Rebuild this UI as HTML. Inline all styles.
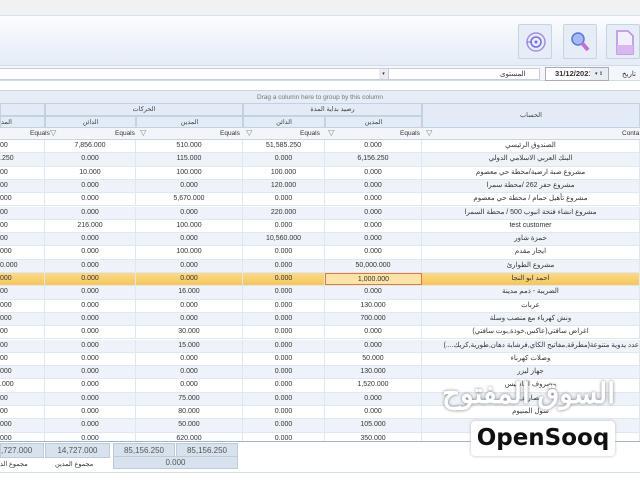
<!DOCTYPE html><html><head><meta charset="utf-8"><style>
*{margin:0;padding:0;box-sizing:border-box}
body{width:640px;height:480px;overflow:hidden;background:#fff;font-family:"Liberation Sans","Noto Sans CJK SC",sans-serif;font-size:7px;color:#333;position:relative}
.a{position:absolute}
.btn{position:absolute;top:24px;width:34px;height:35px;border:1px solid #c9d3e0;background:#e6edf6;border-radius:2px}
.r{position:absolute;left:0;width:640px;height:13.3px;display:flex;border-bottom:1px solid #dfe7f1}
.r div{height:100%;border-right:1px solid #dfe7f1;text-align:center;line-height:12.5px;white-space:nowrap;overflow:hidden}
.r:nth-child(even){background:#eef3fa}
.c0{width:45px;text-align:left!important}.c1{width:91px}.c2{width:107px}.c3{width:82px}.c4{width:97px}.c5{width:218px}
.h{position:absolute;background:#e3ebf6;border:1px solid #c3d1e3;text-align:center;color:#444;font-size:6.5px}
.f{position:absolute;height:15px;background:#d8e2ee;border:1px solid #bfcbd9;text-align:center;line-height:14px;font-size:8px;color:#555}
</style></head><body>
<div class="a" style="left:0;top:0;width:640px;height:15px;background:#f1f1f1"></div>
<div class="a" style="left:0;top:15px;width:640px;height:50px;background:linear-gradient(#fbfcfe,#e4ecf6);border-top:1px solid #d7e0ec"></div>
<div class="btn" style="left:518px"><svg width="34" height="35"><circle cx="17" cy="17" r="9" fill="none" stroke="#a58fe0" stroke-width="1.5"/><circle cx="17" cy="17" r="5" fill="none" stroke="#7b6be0" stroke-width="1.5"/><circle cx="17" cy="17" r="1.5" fill="#7b6be0"/><line x1="8" y1="17" x2="13" y2="17" stroke="#7b6be0"/></svg></div>
<div class="btn" style="left:563px"><svg width="34" height="35"><circle cx="14" cy="14" r="6" fill="#a6b8f5" stroke="#5577dd" stroke-width="1.5"/><line x1="18" y1="18" x2="24" y2="25" stroke="#c070d8" stroke-width="4"/></svg></div>
<div class="btn" style="left:606px"><svg width="34" height="35"><path d="M10 6h11l5 5v18H10z" fill="#f3eefc" stroke="#b58be0" stroke-width="1.5"/><rect x="10" y="20" width="16" height="9" fill="#d8b8f0"/></svg></div>
<div class="a" style="left:0;top:65px;width:640px;height:16px;background:#f3f6fa;border-top:1px solid #d2dbe7;border-bottom:1px solid #d2dbe7"></div>
<div class="a" style="left:0;top:68px;width:388px;height:12px;background:#fff;border:1px solid #ccd;border-left:none"></div>
<div class="a" style="left:379px;top:69px;width:9px;height:10px;background:#e8edf3;font-size:5px;text-align:center;line-height:10px">▾</div>
<div class="a" style="left:388px;top:68px;width:152px;height:12px;background:#fff;border:1px solid #ccd"></div>
<div class="a" style="left:500px;top:70px;font-size:7px">المستوى</div>
<div class="a" style="left:545px;top:67px;width:64px;height:14px;background:#fff;border:1px solid #aab;font-size:7.5px;font-weight:bold;line-height:12px;padding-left:9px">31/12/2021</div>
<div class="a" style="left:590px;top:68px;width:18px;height:12px;background:#e8edf3;font-size:5px;line-height:12px;text-align:center">▾ ⇕</div>
<div class="a" style="left:622px;top:70px;font-size:7px">تاريخ</div>
<div class="a" style="left:0;top:90px;width:640px;height:13px;background:#e6edf6;border-top:1px solid #c9d5e4;text-align:center;line-height:13px;font-size:6.5px;color:#777">Drag a column here to group by this column</div>
<div class="h" style="left:45px;top:103px;width:198px;height:13px;line-height:12px">الحركات</div>
<div class="h" style="left:243px;top:103px;width:179px;height:13px;line-height:12px">رصيد بداية المدة</div>
<div class="h" style="left:0;top:103px;width:45px;height:13px"></div>
<div class="h" style="left:422px;top:103px;width:218px;height:25px;line-height:24px">الحساب</div>
<div class="h" style="left:0;top:116px;width:45px;height:12px;line-height:11px;text-align:left">المد</div>
<div class="h" style="left:45px;top:116px;width:91px;height:12px;line-height:11px">الدائن</div>
<div class="h" style="left:136px;top:116px;width:107px;height:12px;line-height:11px">المدين</div>
<div class="h" style="left:243px;top:116px;width:82px;height:12px;line-height:11px">الدائن</div>
<div class="h" style="left:325px;top:116px;width:97px;height:12px;line-height:11px">المدين</div>
<div class="a" style="left:0;top:128px;width:640px;height:12px;background:#f2f5f9;border-bottom:1px solid #c9d5e4;font-size:6.5px;line-height:12px">
<span class="a" style="left:30px">Equals</span><span class="a" style="left:50px">▽</span>
<span class="a" style="left:115px">Equals</span><span class="a" style="left:140px">▽</span>
<span class="a" style="left:220px">Equals</span><span class="a" style="left:246px">▽</span>
<span class="a" style="left:300px">Equals</span><span class="a" style="left:328px">▽</span>
<span class="a" style="left:400px">Equals</span><span class="a" style="left:426px">▽</span>
<span class="a" style="left:622px">Conta</span></div>
<div class="a" style="left:0;top:140px;width:640px;height:301px;overflow:hidden">
<div class="r" style="top:0"><div class="c0">00</div><div class="c1">7,856.000</div><div class="c2">510.000</div><div class="c3">51,585.250</div><div class="c4">0.000</div><div class="c5">الصندوق الرئيسي</div></div>
<div class="r" style="top:13.3px"><div class="c0">.250</div><div class="c1">0.000</div><div class="c2">115.000</div><div class="c3">0.000</div><div class="c4">6,156.250</div><div class="c5">البنك العربي الاسلامي الدولي</div></div>
<div class="r" style="top:26.6px"><div class="c0">00</div><div class="c1">10.000</div><div class="c2">100.000</div><div class="c3">100.000</div><div class="c4">0.000</div><div class="c5">مشروع صبة ارضية/محطة حي معصوم</div></div>
<div class="r" style="top:39.9px"><div class="c0">00</div><div class="c1">0.000</div><div class="c2">0.000</div><div class="c3">120.000</div><div class="c4">0.000</div><div class="c5">مشروع حفر 262 /محطة سمرا</div></div>
<div class="r" style="top:53.2px"><div class="c0">000</div><div class="c1">0.000</div><div class="c2">5,670.000</div><div class="c3">0.000</div><div class="c4">0.000</div><div class="c5">مشروع تأهيل حمام / محطة حي معصوم</div></div>
<div class="r" style="top:66.5px"><div class="c0">00</div><div class="c1">0.000</div><div class="c2">0.000</div><div class="c3">220.000</div><div class="c4">0.000</div><div class="c5">مشروع انشاء فتحة انبوب 500 / محطة السمرا</div></div>
<div class="r" style="top:79.8px"><div class="c0">00</div><div class="c1">216.000</div><div class="c2">100.000</div><div class="c3">0.000</div><div class="c4">0.000</div><div class="c5">test customer</div></div>
<div class="r" style="top:93.1px"><div class="c0">00</div><div class="c1">0.000</div><div class="c2">0.000</div><div class="c3">10,560.000</div><div class="c4">0.000</div><div class="c5">حمزة شاور</div></div>
<div class="r" style="top:106.4px"><div class="c0">000</div><div class="c1">0.000</div><div class="c2">100.000</div><div class="c3">0.000</div><div class="c4">0.000</div><div class="c5">ايجار مقدم</div></div>
<div class="r" style="top:119.7px"><div class="c0">0.000</div><div class="c1">0.000</div><div class="c2">0.000</div><div class="c3">0.000</div><div class="c4">50,000.000</div><div class="c5">مشروع الطوارئ</div></div>
<div class="r" style="top:133px;background:linear-gradient(#fbd98a,#f6c65a)"><div class="c0">000</div><div class="c1">0.000</div><div class="c2">0.000</div><div class="c3">0.000</div><div class="c4" style="border:1px solid #e07a3a;background:#fde3a8">1,000.000</div><div class="c5">احمد ابو النجا</div></div>
<div class="r" style="top:146.3px"><div class="c0">00</div><div class="c1">0.000</div><div class="c2">16.000</div><div class="c3">0.000</div><div class="c4">0.000</div><div class="c5">الضريبة - ذمم مدينة</div></div>
<div class="r" style="top:159.6px"><div class="c0">000</div><div class="c1">0.000</div><div class="c2">0.000</div><div class="c3">0.000</div><div class="c4">130.000</div><div class="c5">عربات</div></div>
<div class="r" style="top:172.9px"><div class="c0">000</div><div class="c1">0.000</div><div class="c2">0.000</div><div class="c3">0.000</div><div class="c4">700.000</div><div class="c5">ونش كهرباء مع منصب وسلة</div></div>
<div class="r" style="top:186.2px"><div class="c0">00</div><div class="c1">0.000</div><div class="c2">30.000</div><div class="c3">0.000</div><div class="c4">0.000</div><div class="c5">اغراض سافتي(عاكس,خوذة,بوت سافتي)</div></div>
<div class="r" style="top:199.5px"><div class="c0">00</div><div class="c1">0.000</div><div class="c2">15.000</div><div class="c3">0.000</div><div class="c4">0.000</div><div class="c5" style="text-align:right">عدد يدوية متنوعة(مطرقة,مفاتيح الكاي,فرشاية دهان,طورية,كريك....)</div></div>
<div class="r" style="top:212.8px"><div class="c0">00</div><div class="c1">0.000</div><div class="c2">0.000</div><div class="c3">0.000</div><div class="c4">50.000</div><div class="c5">وصلات كهرباء</div></div>
<div class="r" style="top:226.1px"><div class="c0">000</div><div class="c1">0.000</div><div class="c2">0.000</div><div class="c3">0.000</div><div class="c4">130.000</div><div class="c5">جهاز ليزر</div></div>
<div class="r" style="top:239.4px"><div class="c0">.000</div><div class="c1">0.000</div><div class="c2">0.000</div><div class="c3">0.000</div><div class="c4">1,520.000</div><div class="c5">مصروف التاسيس</div></div>
<div class="r" style="top:252.7px"><div class="c0">00</div><div class="c1">0.000</div><div class="c2">75.000</div><div class="c3">0.000</div><div class="c4">0.000</div><div class="c5">مصاريف</div></div>
<div class="r" style="top:266px"><div class="c0">00</div><div class="c1">0.000</div><div class="c2">80.000</div><div class="c3">0.000</div><div class="c4">0.000</div><div class="c5">سول المنيوم</div></div>
<div class="r" style="top:279.3px"><div class="c0">000</div><div class="c1">0.000</div><div class="c2">50.000</div><div class="c3">0.000</div><div class="c4">105.000</div><div class="c5"></div></div>
<div class="r" style="top:292.6px"><div class="c0">000</div><div class="c1">0.000</div><div class="c2">620.000</div><div class="c3">0.000</div><div class="c4">350.000</div><div class="c5"></div></div>
</div>
<div class="a" style="left:0;top:441px;width:640px;height:1px;background:#9fb4cf"></div>
<div class="f" style="left:0;top:443px;width:44px;text-align:left">,727.000</div>
<div class="f" style="left:45px;top:443px;width:65px">14,727.000</div>
<div class="f" style="left:113px;top:443px;width:62px">85,156.250</div>
<div class="f" style="left:176px;top:443px;width:62px">85,156.250</div>
<div class="f" style="left:113px;top:456px;width:125px;height:13px;line-height:12px">0.000</div>
<div class="a" style="left:0;top:460px;font-size:6.5px">مجموع الد</div>
<div class="a" style="left:55px;top:460px;font-size:6.5px">مجموع المدين</div>
<div class="a" style="left:0;top:472px;width:640px;height:1px;background:#d6deea"></div>
<div class="a" style="left:470px;top:376px;width:145px;font-size:28px;font-weight:bold;color:#fff;text-shadow:0 0 3px #777;white-space:nowrap;line-height:36px;text-align:center;direction:rtl">السوق المفتوح</div>
<div class="a" style="left:471px;top:421px;width:144px;height:35px;background:#fff;border-radius:4px;box-shadow:0 0 3px #bbb;font-size:23px;font-weight:bold;color:#111;text-align:center;line-height:35px;font-family:'DejaVu Sans',sans-serif">OpenSooq</div>
</body></html>
